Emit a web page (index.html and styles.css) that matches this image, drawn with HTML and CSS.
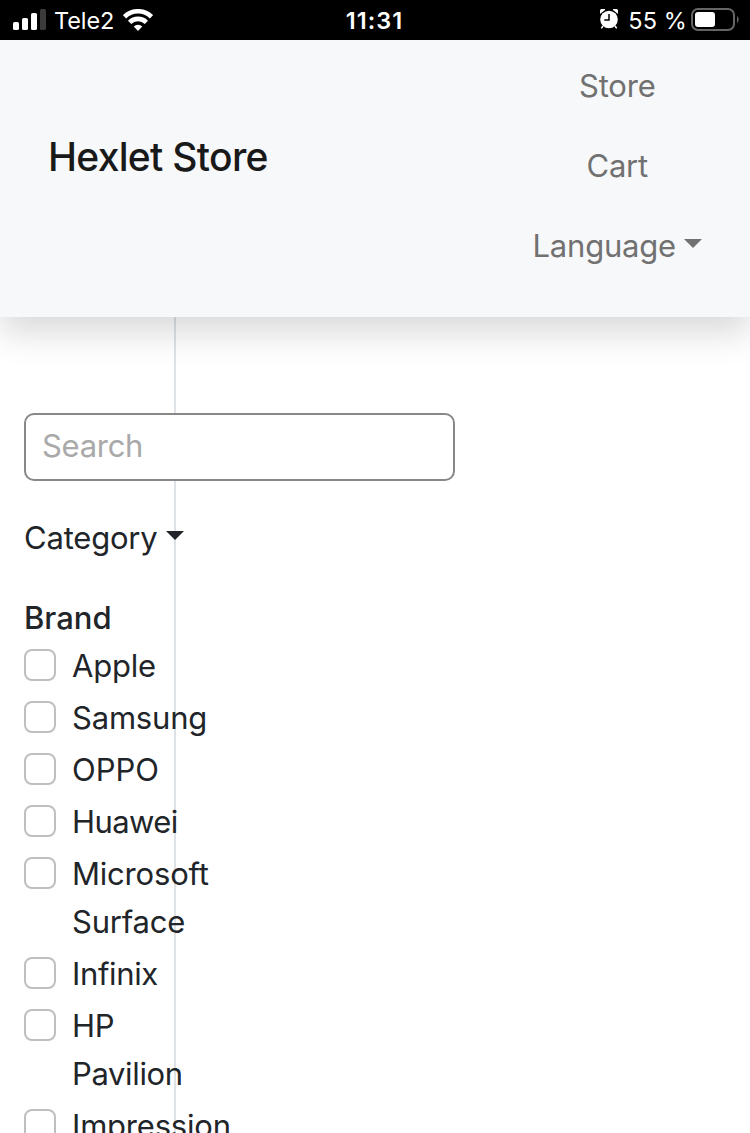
FILE: index.html
```html
<!DOCTYPE html>
<html lang="en">
<head>
<meta charset="utf-8">
<title>Hexlet Store</title>
<link rel="stylesheet" href="styles.css">
</head>
<body>
<div class="statusbar">
  <div class="status-left">
    <svg class="signal" width="33" height="22" viewBox="0 0 33 22" fill="#fff">
      <rect x="0" y="13" width="6" height="8" rx="1.600"/>
      <rect x="9" y="9" width="6" height="12" rx="1.600"/>
      <rect x="18" y="4" width="6" height="17" rx="1.600"/>
      <rect x="27" y="0" width="6" height="21" rx="1.600" fill="#3b3b3b"/>
    </svg>
    <span class="carrier">Tele2</span>
    <svg class="wifi" width="30" height="22" viewBox="0 0 30 22" fill="none" stroke="#fff" stroke-width="4.600">
      <path d="M1.500 7.800a19.200 19.200 0 0 1 27 0"/>
      <path d="M6.600 13.300a12 12 0 0 1 16.800 0"/>
      <path d="M15 22l-4.300-4.400a6.200 6.200 0 0 1 8.600 0z" fill="#fff" stroke="none"/>
    </svg>
  </div>
  <span class="clock">11:31</span>
  <div class="status-right">
    <svg class="alarm" width="18" height="20" viewBox="0 0 18 20">
      <path d="M3 17l-1.700 2.400M15 17l1.700 2.400" stroke="#fff" stroke-width="1.600"/>
      <circle cx="9" cy="10.500" r="8.800" fill="#fff"/>
      <path d="M.3 4.800A3 3 0 0 1 5.300.8zM17.700 4.800A3 3 0 0 0 12.700.8z" fill="#fff"/>
      <path d="M9 5v6H4.300" fill="none" stroke="#000" stroke-width="1.500"/>
    </svg>
    <span class="percent">55 %</span>
    <svg class="battery" width="48" height="24" viewBox="0 0 48 24">
      <rect x="1" y="1" width="42" height="21" rx="6" fill="none" stroke="#666" stroke-width="2"/>
      <rect x="4" y="4" width="20" height="15" rx="3" fill="#fff"/>
      <path d="M46 8c2.200 1.500 2.200 5.500 0 7z" fill="#666"/>
    </svg>
  </div>
</div>
<nav class="navbar">
  <a class="brand">Hexlet Store</a>
  <div class="nav-links">
    <a class="nav-link">Store</a>
    <a class="nav-link">Cart</a>
    <a class="nav-link">Language<i class="caret"></i></a>
  </div>
</nav>
<main class="content">
  <aside class="sidebar">
    <input class="search" type="text" placeholder="Search">
    <div class="category">Category<i class="caret"></i></div>
    <div class="filter-title">Brand</div>
    <label class="check"><input type="checkbox"><span>Apple</span></label>
    <label class="check"><input type="checkbox"><span>Samsung</span></label>
    <label class="check"><input type="checkbox"><span class="loose">OPPO</span></label>
    <label class="check"><input type="checkbox"><span class="tight">Huawei</span></label>
    <label class="check"><input type="checkbox"><span>Microsoft<br>Surface</span></label>
    <label class="check"><input type="checkbox"><span class="snug">Infinix</span></label>
    <label class="check"><input type="checkbox"><span class="snug">HP<br>Pavilion</span></label>
    <label class="check"><input type="checkbox"><span>Impression</span></label>
  </aside>
</main>
</body>
</html>
```

FILE: styles.css
```css
* { box-sizing: border-box; }

body {
  margin: 0;
  height: 1133px;
  overflow: hidden;
  display: flex;
  flex-direction: column;
  background: #fff;
  color: #212529;
  font: 400 31px/48px Inter, "Liberation Sans", sans-serif;
  letter-spacing: -0.2px;
}

.statusbar {
  flex: none;
  height: 40px;
  display: grid;
  grid-template-columns: 1fr auto 1fr;
  align-items: center;
  padding: 0 11px 0 13px;
  background: #000;
  color: #fff;
  font-size: 23.5px;
  line-height: 38px;
  letter-spacing: 0.1px;
}
.status-left, .status-right { display: flex; align-items: center; }
.status-right { justify-content: flex-end; }
.signal { margin-bottom: 1px; }
.carrier { margin-left: 8px; padding-top: 2px; letter-spacing: -0.1px; }
.wifi { margin: 0 0 0 9px; }
.clock { font-weight: 600; padding-top: 2px; letter-spacing: 1px; margin-right: 3px; }
.alarm { margin: 0 10px 2px 0; }
.percent { padding-top: 2px; margin-right: 4px; }
.battery { flex: none; }

.navbar {
  flex: none;
  height: 277px;
  display: flex;
  justify-content: space-between;
  align-items: flex-start;
  padding: 6px 48px 0;
  background: #f7f8fa;
  box-shadow: 0 16px 32px rgba(0, 0, 0, 0.15);
  z-index: 1;
}
.brand {
  margin-top: 81px;
  line-height: 60px;
  font-size: 39px;
  font-weight: 500;
  letter-spacing: -0.7px;
  color: #191919;
}
.nav-links { display: flex; flex-direction: column; align-items: center; }
.nav-link { padding: 16px 0; color: #717171; white-space: nowrap; }

.caret {
  display: inline-block;
  margin-left: 8px;
  vertical-align: 9px;
  border-top: 9.600px solid;
  border-left: 9.600px solid transparent;
  border-right: 9.600px solid transparent;
}

.content { flex: 1; min-height: 0; }
.sidebar {
  width: 176px;
  height: 100%;
  padding: 96px 0 0 24px;
  border-right: 2px solid #dee2e6;
}
.search {
  display: block;
  width: 431px;
  height: 68px;
  padding: 0 16px 3px;
  border: 2px solid #888;
  border-radius: 10px;
  background: #fff;
  font: inherit;
  letter-spacing: -0.3px;
}
.search::placeholder { color: #a9a9a9; opacity: 1; }
.category { margin-top: 33px; white-space: nowrap; }
.filter-title { margin-top: 32px; font-weight: 550; letter-spacing: 0; }
.check { display: flex; gap: 16px; margin-bottom: 4px; white-space: nowrap; }
.check input {
  appearance: none;
  flex: none;
  width: 32px;
  height: 32px;
  margin: 7px 0 0;
  border: 2px solid #bfbfbf;
  border-radius: 8px;
  background: #fff;
}
.loose { letter-spacing: 0; }
.snug { letter-spacing: -0.35px; }
.tight { letter-spacing: -0.6px; }
```
